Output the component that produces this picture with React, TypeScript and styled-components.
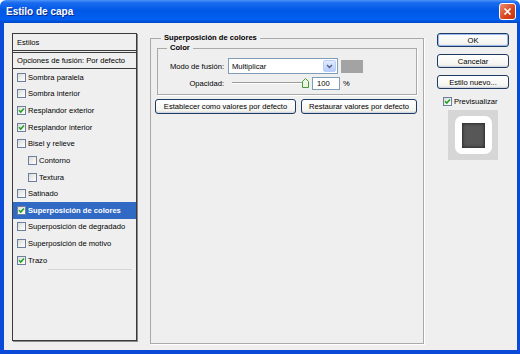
import styled, { createGlobalStyle } from 'styled-components';

const GlobalStyle = createGlobalStyle`
  html, body {
    margin: 0;
    padding: 0;
    background: #ffffff;
  }
  body {
    font-family: "Liberation Sans", Arial, sans-serif;
    font-size: 7.6px;
    color: #000;
  }
`;

const Window = styled.div`
  width: 520px;
  height: 354px;
  display: flex;
  flex-direction: column;
`;

const TitleBar = styled.div`
  height: 23px;
  flex: none;
  display: flex;
  align-items: center;
  justify-content: space-between;
  padding: 0 4px 0 6px;
  box-sizing: border-box;
  border-radius: 6px 6px 0 0;
  background: linear-gradient(
    #4a95f7 0%,
    #1a6bef 12%,
    #0058e6 45%,
    #005ef0 85%,
    #0046c8 100%
  );
`;

const Title = styled.span`
  color: #fff;
  font-size: 10px;
  font-weight: bold;
  text-shadow: 1px 1px 0 #0a2a8c;
`;

const CloseButton = styled.div`
  width: 17px;
  height: 17px;
  box-sizing: border-box;
  border: 1px solid #fff;
  border-radius: 3px;
  background: linear-gradient(135deg, #ec8b6c, #d6451f 60%, #c2330f);
  display: flex;
  align-items: center;
  justify-content: center;
`;

const Frame = styled.div`
  flex: 1;
  display: flex;
  border: 4px solid #0b4ad9;
  border-top: none;
  box-shadow: inset 1px 0 0 #2a6cf0, inset -1px 0 0 #2a6cf0, inset 0 -1px 0 #2a6cf0;
  background: #efefef;
`;

const Body = styled.div`
  flex: 1;
  display: flex;
  align-items: flex-start;
  padding: 10px 8px 0 8px;
  background: #efefef;
`;

/* ---------- left list ---------- */

const StyleList = styled.div`
  width: 125px;
  height: 308px;
  box-sizing: border-box;
  border: 1px solid #3a3a3a;
  box-shadow: 1px 1px 0 #8a8a8a;
  display: flex;
  flex-direction: column;
`;

const ListHeader = styled.div`
  height: 16px;
  display: flex;
  align-items: center;
  padding-left: 4px;
  border-bottom: 3px double #3a3a3a;
`;

const ListDefaults = styled.div`
  height: 15px;
  display: flex;
  align-items: center;
  padding-left: 4px;
  border-bottom: 1px solid #3a3a3a;
`;

const ListItem = styled.div<{ $sub?: boolean; $selected?: boolean }>`
  height: 16.64px;
  display: flex;
  align-items: center;
  gap: 2px;
  padding-left: ${({ $sub }) => ($sub ? '15px' : '4px')};
  background: ${({ $selected }) => ($selected ? '#316ac5' : 'transparent')};
  color: ${({ $selected }) => ($selected ? '#fff' : '#000')};
  font-weight: ${({ $selected }) => ($selected ? 'bold' : 'normal')};
`;

const ListEnd = styled.div`
  height: 1px;
  margin: 0 4px 0 35px;
  background: #d6d6d6;
`;

const Box = styled.span`
  width: 9px;
  height: 9px;
  flex: none;
  box-sizing: border-box;
  border: 1px solid #6d7fa0;
  background: linear-gradient(135deg, #dcdcd6, #ffffff);
  display: inline-flex;
  align-items: center;
  justify-content: center;
`;

const Checkbox = ({ checked }: { checked?: boolean }) => (
  <Box>
    {checked && (
      <svg width="7" height="7" viewBox="0 0 7 7">
        <path d="M1 3.3 L2.7 5 L6 1.5" fill="none" stroke="#21a121" strokeWidth="1.6" />
      </svg>
    )}
  </Box>
);

/* ---------- main group ---------- */

const GroupBox = styled.fieldset`
  margin: 0 0 0 13px;
  width: 273px;
  height: 311px;
  box-sizing: border-box;
  padding: 0 6px;
  border: 1px solid #a9a9a9;
  box-shadow: 1px 1px 0 #fff;
  display: flex;
  flex-direction: column;
`;

const Legend = styled.legend<{ $offset: number }>`
  margin-left: ${({ $offset }) => $offset}px;
  padding: 0 3px;
  font-weight: bold;
  line-height: 10px;
`;

const InnerGroup = styled.fieldset`
  margin: 0;
  padding: 0 6px 4px 6px;
  border: 1px solid #a9a9a9;
  box-shadow: 1px 1px 0 #fff;
`;

const FieldGrid = styled.div`
  display: grid;
  grid-template-columns: 60px auto;
  column-gap: 4px;
  row-gap: 2px;
  margin-top: 5px;
  align-items: center;
`;

const Label = styled.span`
  text-align: right;
`;

const Controls = styled.div`
  display: flex;
  align-items: center;
`;

const Dropdown = styled.div`
  width: 110px;
  height: 16px;
  box-sizing: border-box;
  border: 1px solid #7f9db9;
  background: #fff;
  display: flex;
  align-items: center;
  justify-content: space-between;
  padding: 1px 1px 1px 3px;
`;

const DropButton = styled.div`
  width: 13px;
  height: 12px;
  box-sizing: border-box;
  border: 1px solid #b9cffa;
  border-radius: 2px;
  background: linear-gradient(#e2ebfe, #b7cdfb);
  display: flex;
  align-items: center;
  justify-content: center;
`;

const Swatch = styled.div`
  width: 22px;
  height: 13px;
  margin-left: 3px;
  background: #a3a3a3;
`;

const Slider = styled.div`
  width: 77px;
  height: 14px;
  margin-left: 4px;
  display: flex;
  align-items: center;
`;

const SliderTrack = styled.div`
  flex: 1;
  height: 0;
  border-top: 1px solid #9a9a9a;
  border-bottom: 1px solid #fff;
`;

const NumberInput = styled.div`
  width: 28px;
  height: 13px;
  margin-left: 3px;
  box-sizing: border-box;
  border: 1px solid #7f9db9;
  background: #fff;
  display: flex;
  align-items: center;
  padding-left: 4px;
`;

const Unit = styled.span`
  margin-left: 3px;
`;

const ButtonRow = styled.div`
  display: flex;
  gap: 5px;
  margin: 4px 0 0 -2px;
`;

const XPButton = styled.div<{ $width?: number; $height?: number; $default?: boolean }>`
  width: ${({ $width }) => ($width ? `${$width}px` : '100%')};
  height: ${({ $height }) => $height ?? 15}px;
  box-sizing: border-box;
  border: 1px solid #1f3b62;
  border-radius: 3px;
  background: linear-gradient(#ffffff, #f4f4f0 80%, #dcdad2);
  box-shadow: ${({ $default }) =>
    $default ? 'inset 0 0 0 1px #9cbaf2' : 'inset 0 -1px 0 #cfd6e6'};
  display: flex;
  align-items: center;
  justify-content: center;
  white-space: nowrap;
`;

/* ---------- right column ---------- */

const SideColumn = styled.div`
  width: 72px;
  margin-left: 13px;
  display: flex;
  flex-direction: column;
  gap: 7px;
`;

const PreviewToggle = styled.div`
  display: flex;
  align-items: center;
  gap: 2px;
  height: 10px;
  margin-left: 6px;
`;

const PreviewFrame = styled.div`
  width: 50px;
  height: 50px;
  margin: -3px 0 0 11px;
  background: #d6d6d6;
  display: flex;
  align-items: center;
  justify-content: center;
`;

const PreviewTile = styled.div`
  width: 37px;
  height: 38px;
  border-radius: 7px;
  background: #fff;
  display: flex;
  align-items: center;
  justify-content: center;
`;

const PreviewSquare = styled.div`
  width: 23px;
  height: 25px;
  background: #575757;
  box-shadow: inset 0 0 3px 1px #2c2c2c;
`;

const layers = [
  { label: 'Sombra paralela' },
  { label: 'Sombra interior' },
  { label: 'Resplandor exterior', checked: true },
  { label: 'Resplandor interior', checked: true },
  { label: 'Bisel y relieve' },
  { label: 'Contorno', sub: true },
  { label: 'Textura', sub: true },
  { label: 'Satinado' },
  { label: 'Superposición de colores', checked: true, selected: true },
  { label: 'Superposición de degradado' },
  { label: 'Superposición de motivo' },
  { label: 'Trazo', checked: true },
];

export default function App() {
  return (
    <>
      <GlobalStyle />
      <Window>
        <TitleBar>
          <Title>Estilo de capa</Title>
          <CloseButton>
            <svg width="9" height="9" viewBox="0 0 9 9">
              <path d="M1.5 1.5 L7.5 7.5 M7.5 1.5 L1.5 7.5" stroke="#fff" strokeWidth="1.6" />
            </svg>
          </CloseButton>
        </TitleBar>
        <Frame>
          <Body>
            <StyleList>
              <ListHeader>Estilos</ListHeader>
              <ListDefaults>Opciones de fusión: Por defecto</ListDefaults>
              {layers.map((l) => (
                <ListItem key={l.label} $sub={l.sub} $selected={l.selected}>
                  <Checkbox checked={l.checked} />
                  {l.label}
                </ListItem>
              ))}
              <ListEnd />
            </StyleList>

            <GroupBox>
              <Legend $offset={4}>Superposición de colores</Legend>
              <InnerGroup>
                <Legend $offset={3}>Color</Legend>
                <FieldGrid>
                  <Label>Modo de fusión:</Label>
                  <Controls>
                    <Dropdown>
                      Multiplicar
                      <DropButton>
                        <svg width="7" height="5" viewBox="0 0 7 5">
                          <path d="M1 1 L3.5 3.5 L6 1" fill="none" stroke="#4d6185" strokeWidth="1.4" />
                        </svg>
                      </DropButton>
                    </Dropdown>
                    <Swatch />
                  </Controls>
                  <Label>Opacidad:</Label>
                  <Controls>
                    <Slider>
                      <SliderTrack />
                      <svg width="7" height="10" viewBox="0 0 7 10">
                        <path d="M0.5 3.5 L3.5 0.5 L6.5 3.5 V9.5 H0.5 Z" fill="#eaf6e2" stroke="#4a9a3a" />
                      </svg>
                    </Slider>
                    <NumberInput>100</NumberInput>
                    <Unit>%</Unit>
                  </Controls>
                </FieldGrid>
              </InnerGroup>
              <ButtonRow>
                <XPButton $width={141}>Establecer como valores por defecto</XPButton>
                <XPButton $width={116}>Restaurar valores por defecto</XPButton>
              </ButtonRow>
            </GroupBox>

            <SideColumn>
              <XPButton $height={14} $default>OK</XPButton>
              <XPButton $height={14}>Cancelar</XPButton>
              <XPButton $height={14}>Estilo nuevo...</XPButton>
              <PreviewToggle>
                <Checkbox checked />
                Previsualizar
              </PreviewToggle>
              <PreviewFrame>
                <PreviewTile>
                  <PreviewSquare />
                </PreviewTile>
              </PreviewFrame>
            </SideColumn>
          </Body>
        </Frame>
      </Window>
    </>
  );
}
